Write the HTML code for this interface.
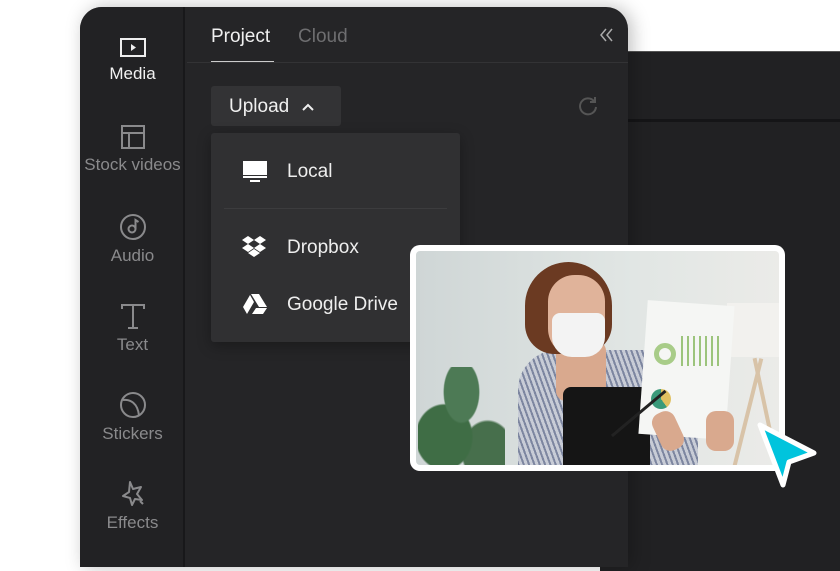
<!DOCTYPE html>
<html><head><style>
*{margin:0;padding:0;box-sizing:border-box}
body{width:840px;height:560px;background:#fff;position:relative;overflow:hidden;font-family:"Liberation Sans",sans-serif}
.abs{position:absolute}
.bgwin{left:600px;top:51px;width:260px;height:520px;background:#212123;border-top:1px solid #555}
.main{left:80px;top:7px;width:548px;height:560px;background:#252527;border-radius:22px 22px 0 0;overflow:hidden;box-shadow:4px 0 18px rgba(0,0,0,.25)}
.side{left:0;top:0;width:105px;height:100%;background:#222224;border-right:2px solid #18181a}
.it{position:absolute;left:0;width:105px;text-align:center;color:#8a8a8c;font-size:17px}
.it svg{display:block;margin:0 auto 5px}
.tab{font-size:19px;top:19px}
</style></head><body>
<div class="abs bgwin"></div>
<div class="abs" style="left:628px;top:119px;width:212px;height:3px;background:#151517"></div>
<div class="abs main">
 <div class="abs side">
  <div class="it" style="top:30px;color:#f2f2f2"><svg width="28" height="22" viewBox="0 0 28 22"><rect x="2" y="2" width="24" height="17" fill="none" stroke="#eee" stroke-width="2"/><path d="M12 7l5 3.5-5 3.5z" fill="#eee"/></svg>Media</div>
  <div class="it" style="top:117px"><svg width="26" height="26" viewBox="0 0 26 26"><rect x="2" y="2" width="22" height="22" fill="none" stroke="#8a8a8c" stroke-width="2"/><path d="M2 9h22M9 9v15" stroke="#8a8a8c" stroke-width="2"/></svg>Stock videos</div>
  <div class="it" style="top:206px"><svg width="28" height="28" viewBox="0 0 28 28"><circle cx="14" cy="14" r="12" fill="none" stroke="#8a8a8c" stroke-width="2"/><circle cx="13" cy="16" r="3.5" fill="none" stroke="#8a8a8c" stroke-width="2"/><path d="M16.5 16V7l3 2" fill="none" stroke="#8a8a8c" stroke-width="2"/></svg>Audio</div>
  <div class="it" style="top:295px"><svg width="28" height="28" viewBox="0 0 28 28"><path d="M3 7V3h22v4M14 3v23M9 26h10" fill="none" stroke="#8a8a8c" stroke-width="2"/></svg>Text</div>
  <div class="it" style="top:384px"><svg width="28" height="28" viewBox="0 0 28 28"><circle cx="14" cy="14" r="12" fill="none" stroke="#8a8a8c" stroke-width="2"/><path d="M4 9c7-1 15 3 16 16" fill="none" stroke="#8a8a8c" stroke-width="2"/></svg>Stickers</div>
  <div class="it" style="top:473px"><svg width="28" height="28" viewBox="0 0 28 28"><path d="M11 2l3 7 8-2-4 7 5 6-7-1-3 6-2-7-7-2 6-4z" fill="none" stroke="#8a8a8c" stroke-width="2" stroke-linejoin="round"/><path d="M21 21l3 3" stroke="#8a8a8c" stroke-width="2"/></svg>Effects</div>
 </div>
 <div class="abs tab" style="left:131px;color:#f0f0f0">Project</div>
 <div class="abs" style="left:131px;top:54px;width:63px;height:2px;background:#ccc"></div>
 <div class="abs tab" style="left:218px;color:#6e6e70">Cloud</div>
 <div class="abs" style="left:107px;top:55px;width:441px;height:1px;background:#333335"></div>
 <svg class="abs" style="left:518px;top:20px" width="16" height="16" viewBox="0 0 16 16"><path d="M8 2L3 8l5 6M14 2L9 8l5 6" fill="none" stroke="#aaa" stroke-width="1.5"/></svg>
 <div class="abs" style="left:131px;top:79px;width:130px;height:40px;background:#333335;border-radius:3px;color:#f0f0f0;font-size:19px;padding:10px 0 0 18px">Upload <svg width="14" height="10" viewBox="0 0 14 10" style="margin-left:6px"><path d="M2 8l5-5 5 5" fill="none" stroke="#eee" stroke-width="2"/></svg></div>
 <svg class="abs" style="left:497px;top:88px" width="22" height="22" viewBox="0 0 22 22"><path d="M17 6A8 8 0 1 0 19 12" fill="none" stroke="#555" stroke-width="2"/><path d="M18 2v5h-5" fill="none" stroke="#555" stroke-width="2"/></svg>
</div>
<div class="abs" style="left:211px;top:133px;width:249px;height:209px;background:#303032;border-radius:3px;box-shadow:0 4px 14px rgba(0,0,0,.3);color:#eee;font-size:19px">
 <svg class="abs" style="left:31px;top:27px" width="26" height="24" viewBox="0 0 26 24"><rect x="1" y="1" width="24" height="14" fill="#fff"/><rect x="1" y="16" width="24" height="2" fill="#fff"/><rect x="8" y="20" width="10" height="2" fill="#fff"/></svg>
 <div class="abs" style="left:76px;top:28px">Local</div>
 <div class="abs" style="left:13px;top:75px;width:223px;height:1px;background:#3c3c3e"></div>
 <svg class="abs" style="left:30px;top:103px" width="26" height="22" viewBox="0 0 26 22"><path d="M7 0l6 4-6 4-6-4zM19 0l6 4-6 4-6-4zM1 12l6-4 6 4-6 4zM25 12l-6-4-6 4 6 4zM7 17l6-4 6 4-6 4z" fill="#fff"/></svg>
 <div class="abs" style="left:76px;top:104px">Dropbox</div>
 <svg class="abs" style="left:32px;top:160px" width="24" height="22" viewBox="0 0 24 22"><path d="M8 1h8l8 13h-8zM7 2l4 7-7 12-4-7zM9 21l4-6h11l-4 6z" fill="#fff"/></svg>
 <div class="abs" style="left:76px;top:161px">Google Drive</div>
</div>
<div class="abs" style="left:410px;top:245px;width:375px;height:226px;background:#fff;border-radius:10px;padding:6px">
 <div style="position:relative;width:100%;height:100%;border-radius:4px;overflow:hidden;background:linear-gradient(90deg,#cfd6d6,#e1e6e4 60%,#ebebe8)">
  <div class="abs" style="left:311px;top:52px;width:52px;height:54px;background:#f2f1ee"></div>
  <div class="abs" style="left:330px;top:106px;width:4px;height:110px;background:#d8c3a8;transform:rotate(14deg)"></div>
  <div class="abs" style="left:348px;top:106px;width:4px;height:110px;background:#d8c3a8;transform:rotate(-12deg)"></div>
  <div class="abs" style="left:2px;top:116px;width:87px;height:100px;background:radial-gradient(ellipse at 50% 25%,#4d7a55 0 28%,transparent 30%),radial-gradient(ellipse at 30% 70%,#3f6d45 0 32%,transparent 34%),radial-gradient(ellipse at 80% 85%,#476f4c 0 25%,transparent 27%)"></div>
  <div class="abs" style="left:102px;top:99px;width:180px;height:125px;background:repeating-linear-gradient(70deg,#c8ccd6 0 3px,#7d86a0 3px 5px);border-radius:40px 40px 0 0"></div>
  <div class="abs" style="left:140px;top:90px;width:50px;height:60px;background:#d9a98e;border-radius:10px"></div>
  <div class="abs" style="left:147px;top:136px;width:87px;height:85px;background:#151515;border-radius:8px"></div>
  <div class="abs" style="left:109px;top:11px;width:87px;height:92px;background:#6b3a22;border-radius:44px 44px 30px 30px"></div>
  <div class="abs" style="left:132px;top:24px;width:57px;height:82px;background:#e0b39a;border-radius:28px 28px 30px 30px"></div>
  <div class="abs" style="left:136px;top:62px;width:53px;height:44px;background:#f3f3f3;border-radius:8px 8px 20px 20px"></div>
  <div class="abs" style="left:227px;top:52px;width:87px;height:134px;background:#f5f6f4;transform:rotate(4deg)"></div>
  <div class="abs" style="left:238px;top:92px;width:22px;height:22px;border:5px solid #a8cc88;border-radius:50%"></div>
  <div class="abs" style="left:265px;top:85px;width:40px;height:30px;background:repeating-linear-gradient(90deg,#9cc47c 0 2px,transparent 2px 6px)"></div>
  <div class="abs" style="left:235px;top:138px;width:20px;height:20px;background:conic-gradient(#e0c060 0 40%,#3a9a7a 40% 100%);border-radius:50%"></div>
  <div class="abs" style="left:240px;top:160px;width:24px;height:40px;background:#d9a98e;border-radius:10px;transform:rotate(-25deg)"></div>
  <div class="abs" style="left:290px;top:160px;width:28px;height:40px;background:#d9a98e;border-radius:10px"></div>
  <div class="abs" style="left:248px;top:140px;width:3px;height:70px;background:#222;transform:rotate(50deg);transform-origin:top"></div>
 </div>
</div>
<svg class="abs" style="left:752px;top:417px" width="68" height="72" viewBox="0 0 68 72"><path d="M8 8L62 36L37 45L31 68Z" fill="#00c4dd" stroke="#fff" stroke-width="5" stroke-linejoin="round"/></svg>
</body></html>
